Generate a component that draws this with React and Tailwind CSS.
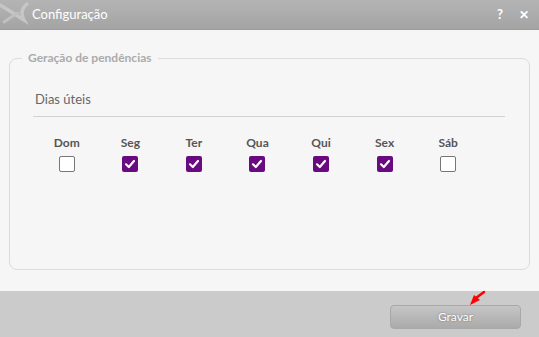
import React from 'react';

const days = [
  { label: 'Dom', checked: false },
  { label: 'Seg', checked: true },
  { label: 'Ter', checked: true },
  { label: 'Qua', checked: true },
  { label: 'Qui', checked: true },
  { label: 'Sex', checked: true },
  { label: 'Sáb', checked: false },
];

const Box = ({ checked }) =>
  checked ? (
    <span className="w-[16px] h-[16px] rounded-[2px] bg-[#6a0a80] flex items-center justify-center">
      <svg width="12" height="12" viewBox="0 0 12 12">
        <path d="M2 6.3 L4.8 9 L10 3" fill="none" stroke="white" strokeWidth="2.2" strokeLinecap="round" strokeLinejoin="round" />
      </svg>
    </span>
  ) : (
    <span className="w-[16px] h-[16px] rounded-[2px] bg-white border border-[#777]" />
  );

const App = () => {
  return (
    <div className="w-[539px] h-[337px] flex flex-col font-['Lato',sans-serif] overflow-hidden relative">
      {/* Title bar */}
      <div className="h-[30px] bg-gradient-to-b from-[#b4b4b4] to-[#a4a4a4] flex items-center relative border-b border-[#9c9c9c]">
        <svg className="absolute left-0 top-0" width="30" height="30" viewBox="0 0 30 30">
          <path d="M-2 4 C6 8 14 14 24 20 C20 13 22 8 27 4" fill="none" stroke="#c6c6c6" strokeWidth="3.5" strokeLinecap="round" />
          <path d="M4 22 C10 18 14 15 18 13" fill="none" stroke="#c0c0c0" strokeWidth="3" strokeLinecap="round" />
        </svg>
        <span className="ml-[32px] text-white text-[13px] leading-none">Configuração</span>
        <div className="ml-auto flex items-center gap-[16px] mr-[10px] text-white text-[13px] font-bold">
          <span>?</span>
          <span className="text-[12px]">✕</span>
        </div>
      </div>

      {/* Body */}
      <div className="h-[261px] bg-[#f6f6f6] px-[9px] pt-[20px]">
        <fieldset className="h-[220px] border border-[#dcdcdc] rounded-[8px] px-[24px] pb-0 m-0 min-w-0">
          <legend className="ml-[-12px] px-[6px] text-[12px] font-bold text-[#ababab] leading-[16px]">Geração de pendências</legend>
          <div className="mt-[24px] text-[13px] text-[#666] pb-[6px] border-b border-[#d2d2d2] w-[472px] ml-[-1px] pl-[2px]">Dias úteis</div>
          <div className="grid grid-cols-7 w-[445px] ml-[1px] mt-[18px]">
            {days.map((d, i) => (
              <div key={i} className="flex flex-col items-center gap-[5px]">
                <span className="text-[12px] font-bold text-[#555] leading-[16px]">{d.label}</span>
                <Box checked={d.checked} />
              </div>
            ))}
          </div>
        </fieldset>
      </div>

      {/* Footer */}
      <div className="flex-1 bg-[#cbcbcb] flex justify-end items-start pt-[14px] pr-[18px]">
        <button className="w-[131px] h-[24px] rounded-[4px] border border-[#a8a8a8] bg-gradient-to-b from-[#c6c6c6] to-[#aaaaaa] text-white text-[12px] [text-shadow:0_0_2px_#666]">
          Gravar
        </button>
      </div>

      {/* Red pointer arrow */}
      <svg className="absolute left-[466px] top-[290px]" width="22" height="18" viewBox="0 0 22 18">
        <path d="M18 2 L10 8" stroke="#ff0000" strokeWidth="2.5" strokeLinecap="round" />
        <path d="M4 15 L8 5 L14 10 Z" fill="#ff0000" />
      </svg>
    </div>
  );
};

export default App;
